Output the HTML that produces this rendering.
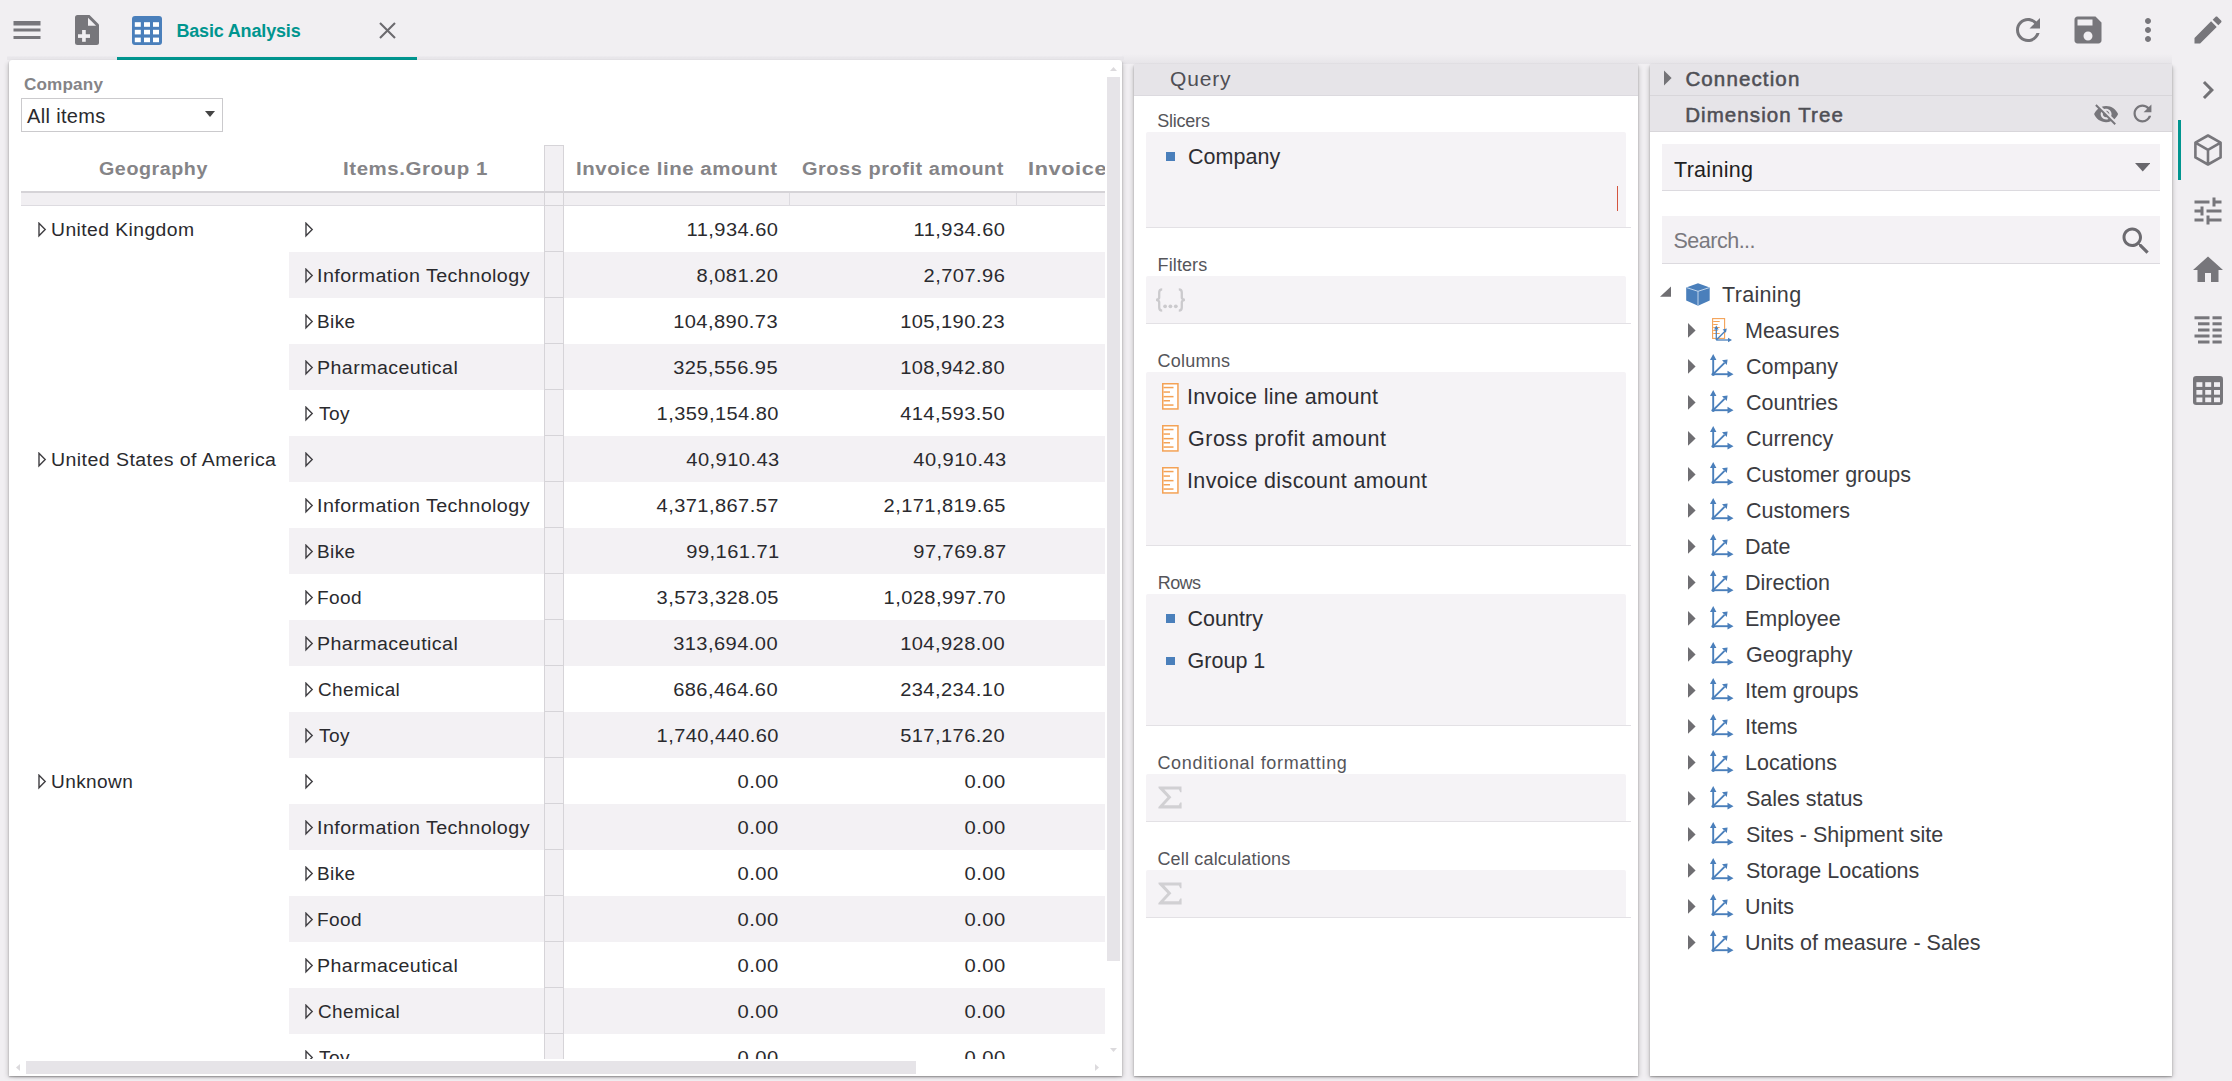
<!DOCTYPE html>
<html><head><meta charset="utf-8"><title>Basic Analysis</title>
<style>
html,body{margin:0;padding:0;width:2232px;height:1081px;overflow:hidden;background:#f1eff2;}
body{position:relative;font-family:"Liberation Sans",sans-serif;}
.t{position:absolute;white-space:nowrap;line-height:1;font-family:"Liberation Sans",sans-serif;}
</style></head><body>
<svg style="position:absolute;left:9px;top:12px;" width="36" height="36" viewBox="0 0 24 24"><path fill="#77767b" d="M3 18h18v-2H3v2zm0-5h18v-2H3v2zm0-6v2h18V6H3z"/></svg>
<svg style="position:absolute;left:69px;top:12px;" width="36" height="36" viewBox="0 0 36 36"><path fill="#77767b" d="M8.5 3h12L30 12.5V30.5a2.5 2.5 0 0 1-2.5 2.5H8.5A2.5 2.5 0 0 1 6 30.5V5.5A2.5 2.5 0 0 1 8.5 3z"/><path fill="#f1eff2" d="M19 5.8v7.9h8.1z"/><rect fill="#f1eff2" x="9" y="22.25" width="12" height="3.65"/><rect fill="#f1eff2" x="13.1" y="18" width="3.65" height="11.8"/></svg>
<svg style="position:absolute;left:132px;top:16px;" width="30" height="29" viewBox="0 0 30 29"><rect fill="#4a7fbb" x="0" y="0" width="30" height="29" rx="3"/><rect fill="#fff" x="2.8" y="6.2" width="6" height="4.6"/><rect fill="#fff" x="2.8" y="13.8" width="6" height="4.6"/><rect fill="#fff" x="2.8" y="21.6" width="6" height="4.6"/><rect fill="#fff" x="12" y="6.2" width="6" height="4.6"/><rect fill="#fff" x="12" y="13.8" width="6" height="4.6"/><rect fill="#fff" x="12" y="21.6" width="6" height="4.6"/><rect fill="#fff" x="21" y="6.2" width="6" height="4.6"/><rect fill="#fff" x="21" y="13.8" width="6" height="4.6"/><rect fill="#fff" x="21" y="21.6" width="6" height="4.6"/></svg>
<svg style="position:absolute;left:378px;top:21px;" width="19" height="19" viewBox="0 0 19 19"><path d="M2 2L17 17M17 2L2 17" stroke="#6b6a6e" stroke-width="2.1" fill="none"/></svg>
<svg style="position:absolute;left:2010px;top:12px;" width="36" height="36" viewBox="0 0 24 24"><path fill="#77767b" d="M17.65 6.35C16.2 4.9 14.21 4 12 4c-4.42 0-7.99 3.58-7.99 8s3.57 8 7.99 8c3.73 0 6.84-2.55 7.73-6h-2.08c-.82 2.33-3.04 4-5.65 4-3.31 0-6-2.69-6-6s2.69-6 6-6c1.66 0 3.14.69 4.22 1.78L13 11h7V4l-2.35 2.35z"/></svg>
<svg style="position:absolute;left:2070px;top:12px;" width="36" height="36" viewBox="0 0 24 24"><path fill="#77767b" d="M17 3H5c-1.11 0-2 .9-2 2v14c0 1.1.89 2 2 2h14c1.1 0 2-.9 2-2V7l-4-4zm-5 16c-1.66 0-3-1.34-3-3s1.34-3 3-3 3 1.34 3 3-1.34 3-3 3zm3-10H5V5h10v4z"/></svg>
<svg style="position:absolute;left:2130px;top:12px;" width="36" height="36" viewBox="0 0 24 24"><path fill="#77767b" d="M12 8c1.1 0 2-.9 2-2s-.9-2-2-2-2 .9-2 2 .9 2 2 2zm0 2c-1.1 0-2 .9-2 2s.9 2 2 2 2-.9 2-2-.9-2-2-2zm0 6c-1.1 0-2 .9-2 2s.9 2 2 2 2-.9 2-2-.9-2-2-2z"/></svg>
<svg style="position:absolute;left:2190px;top:12px;" width="36" height="36" viewBox="0 0 24 24"><path fill="#77767b" d="M3 17.25V21h3.75L17.81 9.94l-3.75-3.75L3 17.25zM20.71 7.04c.39-.39.39-1.02 0-1.41l-2.34-2.34c-.39-.39-1.02-.39-1.41 0l-1.83 1.83 3.75 3.75 1.83-1.83z"/></svg>
<div style="position:absolute;left:7px;top:56px;width:1117px;height:4px;background:linear-gradient(#eeecf0,#e8e6ea 40%,#e8e6ea);"></div>
<div style="position:absolute;left:1122px;top:54px;width:1050px;height:10px;background:linear-gradient(rgba(230,228,232,0),#e6e4e8);"></div>
<div style="position:absolute;left:117px;top:57px;width:300px;height:3px;background:#00958f;"></div>
<div style="position:absolute;left:9px;top:60px;width:1113px;height:1016px;background:#fff;border-radius:3px 3px 0 0;box-shadow:0 1px 2px rgba(0,0,0,0.32),3px 2px 4px -1px rgba(0,0,0,0.12),-3px 2px 4px -1px rgba(0,0,0,0.12)"></div>
<div style="position:absolute;left:21px;top:98px;width:202px;height:34px;background:#fff;box-sizing:border-box;border:1px solid #cbcacd"></div>
<svg style="position:absolute;left:205px;top:111px;" width="10" height="6" viewBox="0 0 10 6"><path d="M0 0H10L5 6z" fill="#444"/></svg>
<div style="position:absolute;left:1107px;top:77px;width:13px;height:884px;background:#e6e4e8;"></div>
<svg style="position:absolute;left:1110px;top:67px;" width="7" height="4" viewBox="0 0 7 4"><path d="M0 4L3.5 0L7 4z" fill="#dcdadd"/></svg>
<svg style="position:absolute;left:1110px;top:1048px;" width="7" height="4" viewBox="0 0 7 4"><path d="M0 0L3.5 4L7 0z" fill="#dcdadd"/></svg>
<div style="position:absolute;left:26px;top:1061px;width:890px;height:13px;background:#e6e4e8;"></div>
<svg style="position:absolute;left:16px;top:1064px;" width="4" height="7" viewBox="0 0 4 7"><path d="M4 0L0 3.5L4 7z" fill="#dcdadd"/></svg>
<svg style="position:absolute;left:1095px;top:1064px;" width="4" height="7" viewBox="0 0 4 7"><path d="M0 0L4 3.5L0 7z" fill="#dcdadd"/></svg>
<div style="position:absolute;left:1134px;top:64px;width:504px;height:1012px;background:#fff;border-radius:2px 2px 0 0;box-shadow:0 1px 2px rgba(0,0,0,0.32),3px 2px 4px -1px rgba(0,0,0,0.12),-3px 2px 4px -1px rgba(0,0,0,0.12)"></div>
<div style="position:absolute;left:1134px;top:64px;width:504px;height:31px;background:#e6e4e8;border-bottom:1px solid #dcdadf"></div>
<div style="position:absolute;left:1146px;top:132px;width:480px;height:96px;background:#f5f3f6;border-radius:2px 2px 0 0"></div>
<div style="position:absolute;left:1146px;top:227px;width:485px;height:1px;background:#e3e1e5;"></div>
<div style="position:absolute;left:1146px;top:276px;width:480px;height:48px;background:#f5f3f6;border-radius:2px 2px 0 0"></div>
<div style="position:absolute;left:1146px;top:323px;width:485px;height:1px;background:#e3e1e5;"></div>
<div style="position:absolute;left:1146px;top:372px;width:480px;height:174px;background:#f5f3f6;border-radius:2px 2px 0 0"></div>
<div style="position:absolute;left:1146px;top:545px;width:485px;height:1px;background:#e3e1e5;"></div>
<div style="position:absolute;left:1146px;top:594px;width:480px;height:132px;background:#f5f3f6;border-radius:2px 2px 0 0"></div>
<div style="position:absolute;left:1146px;top:725px;width:485px;height:1px;background:#e3e1e5;"></div>
<div style="position:absolute;left:1146px;top:774px;width:480px;height:48px;background:#f5f3f6;border-radius:2px 2px 0 0"></div>
<div style="position:absolute;left:1146px;top:821px;width:485px;height:1px;background:#e3e1e5;"></div>
<div style="position:absolute;left:1146px;top:870px;width:480px;height:48px;background:#f5f3f6;border-radius:2px 2px 0 0"></div>
<div style="position:absolute;left:1146px;top:917px;width:485px;height:1px;background:#e3e1e5;"></div>
<div style="position:absolute;left:1166px;top:152px;width:9px;height:9px;background:#4a7fbb;"></div>
<div style="position:absolute;left:1617.2px;top:185.5px;width:1.2px;height:25.5px;background:#d4553f;"></div>
<svg style="position:absolute;left:1154px;top:288px;" width="32" height="24" viewBox="0 0 32 24"><g stroke="#cbcacd" stroke-width="2.3" fill="none"><path d="M8.2 1.4C6 1.4 5.2 2.3 5.2 4.5V9.6C5.2 11 4.3 11.6 2.2 11.9C4.3 12.2 5.2 12.8 5.2 14.2V19.6C5.2 21.8 6 22.7 8.2 22.7"/><path d="M24.8 1.4C27 1.4 27.8 2.3 27.8 4.5V9.6C27.8 11 28.7 11.6 30.8 11.9C28.7 12.2 27.8 12.8 27.8 14.2V19.6C27.8 21.8 27 22.7 24.8 22.7"/></g><g fill="#cbcacd"><circle cx="11.1" cy="18.3" r="1.9"/><circle cx="16.4" cy="18.3" r="1.9"/><circle cx="21.8" cy="18.3" r="1.9"/></g></svg>
<svg style="position:absolute;left:1162px;top:383px;" width="17" height="27" viewBox="0 0 17 27"><rect x="0.75" y="0.75" width="15.2" height="25.2" fill="#fff" stroke="#f4a256" stroke-width="1.5"/><rect x="1.5" y="3.8" width="10" height="1.5" fill="#f4a256"/><rect x="1.5" y="8.3" width="6.5" height="1.5" fill="#f4a256"/><rect x="1.5" y="12.9" width="10" height="1.5" fill="#f4a256"/><rect x="1.5" y="17.0" width="6.5" height="1.5" fill="#f4a256"/><rect x="1.5" y="21.3" width="10" height="1.5" fill="#f4a256"/></svg>
<svg style="position:absolute;left:1162px;top:425px;" width="17" height="27" viewBox="0 0 17 27"><rect x="0.75" y="0.75" width="15.2" height="25.2" fill="#fff" stroke="#f4a256" stroke-width="1.5"/><rect x="1.5" y="3.8" width="10" height="1.5" fill="#f4a256"/><rect x="1.5" y="8.3" width="6.5" height="1.5" fill="#f4a256"/><rect x="1.5" y="12.9" width="10" height="1.5" fill="#f4a256"/><rect x="1.5" y="17.0" width="6.5" height="1.5" fill="#f4a256"/><rect x="1.5" y="21.3" width="10" height="1.5" fill="#f4a256"/></svg>
<svg style="position:absolute;left:1162px;top:467px;" width="17" height="27" viewBox="0 0 17 27"><rect x="0.75" y="0.75" width="15.2" height="25.2" fill="#fff" stroke="#f4a256" stroke-width="1.5"/><rect x="1.5" y="3.8" width="10" height="1.5" fill="#f4a256"/><rect x="1.5" y="8.3" width="6.5" height="1.5" fill="#f4a256"/><rect x="1.5" y="12.9" width="10" height="1.5" fill="#f4a256"/><rect x="1.5" y="17.0" width="6.5" height="1.5" fill="#f4a256"/><rect x="1.5" y="21.3" width="10" height="1.5" fill="#f4a256"/></svg>
<div style="position:absolute;left:1166px;top:614px;width:9px;height:8.5px;background:#4a7fbb;"></div>
<div style="position:absolute;left:1166px;top:656.5px;width:9px;height:8.5px;background:#4a7fbb;"></div>
<svg style="position:absolute;left:1158.3px;top:786.3px;" width="24" height="23" viewBox="0 0 24 23"><path d="M0.5 0.5H23.5V6.2H22.2L20.9 3.6H6.3L13.4 11.3L5.9 19.2H20.8L22.1 16.4H23.6V22.5H0.4V20.9L9.4 11.3L0.5 2.1z" fill="#d1d0d3"/></svg>
<svg style="position:absolute;left:1158.3px;top:882.4px;" width="24" height="23" viewBox="0 0 24 23"><path d="M0.5 0.5H23.5V6.2H22.2L20.9 3.6H6.3L13.4 11.3L5.9 19.2H20.8L22.1 16.4H23.6V22.5H0.4V20.9L9.4 11.3L0.5 2.1z" fill="#d1d0d3"/></svg>
<div style="position:absolute;left:1650px;top:64px;width:522px;height:1012px;background:#fff;border-radius:2px 2px 0 0;box-shadow:0 1px 2px rgba(0,0,0,0.32),3px 2px 4px -1px rgba(0,0,0,0.12),-3px 2px 4px -1px rgba(0,0,0,0.12)"></div>
<div style="position:absolute;left:1650px;top:64px;width:522px;height:31px;background:#e6e4e8;border-bottom:1px solid #d8d6da"></div>
<div style="position:absolute;left:1650px;top:96px;width:522px;height:35px;background:#e6e4e8;border-bottom:1px solid #d8d6da"></div>
<svg style="position:absolute;left:1664px;top:70px;" width="8" height="16" viewBox="0 0 8 16"><path d="M0 0.4L7.6 8L0 15.4z" fill="#747377"/></svg>
<svg style="position:absolute;left:2093px;top:100.5px;" width="26.2" height="26.2" viewBox="0 0 24 24"><path fill="#77767b" d="M12 7c2.76 0 5 2.24 5 5 0 .65-.13 1.26-.36 1.83l2.92 2.92c1.51-1.26 2.7-2.89 3.43-4.75-1.73-4.39-6-7.5-11-7.5-1.4 0-2.74.25-3.98.7l2.16 2.16C10.74 7.13 11.35 7 12 7zM2 4.27l2.28 2.28.46.46C3.08 8.3 1.780 10.02 1 12c1.73 4.39 6 7.5 11 7.5 1.55 0 3.03-.3 4.38-.84l.42.42L19.73 22 21 20.73 3.27 3 2 4.27zM7.53 9.8l1.55 1.55c-.05.21-.08.43-.08.65 0 1.66 1.34 3 3 3 .22 0 .44-.03.65-.08l1.55 1.55c-.67.33-1.41.53-2.2.53-2.76 0-5-2.24-5-5 0-.79.2-1.53.53-2.2zm4.31-.78l3.15 3.15.02-.16c0-1.660-1.34-3-3-3l-.17.01z"/></svg>
<svg style="position:absolute;left:2128.9px;top:100.2px;" width="26.9" height="26.9" viewBox="0 0 24 24"><path fill="#77767b" d="M17.65 6.35C16.2 4.9 14.21 4 12 4c-4.42 0-7.99 3.58-7.99 8s3.57 8 7.99 8c3.73 0 6.84-2.55 7.73-6h-2.08c-.82 2.33-3.04 4-5.65 4-3.31 0-6-2.69-6-6s2.69-6 6-6c1.66 0 3.14.69 4.22 1.78L13 11h7V4l-2.35 2.35z"/></svg>
<div style="position:absolute;left:1662px;top:144px;width:498px;height:47px;background:#f4f2f5;border-bottom:1px solid #dcdadf;box-sizing:border-box"></div>
<svg style="position:absolute;left:2134.5px;top:163px;" width="15.5" height="8.5" viewBox="0 0 15.5 8.5"><path d="M0 0H15.5L7.75 8.5z" fill="#68676c"/></svg>
<div style="position:absolute;left:1662px;top:216px;width:498px;height:48px;background:#f4f2f5;border-bottom:1px solid #dcdadf;box-sizing:border-box"></div>
<svg style="position:absolute;left:2118px;top:222.5px;" width="36" height="36" viewBox="0 0 24 24"><path fill="#6c6b70" d="M15.5 14h-.79l-.28-.27C15.41 12.59 16 11.11 16 9.5 16 5.91 13.09 3 9.5 3S3 5.91 3 9.5 5.910 16 9.5 16c1.61 0 3.09-.59 4.23-1.57l.27.28v.79l5 4.99L20.49 19l-4.99-5zm-6 0C7.01 14 5 11.99 5 9.5S7.01 5 9.5 5 14 7.01 14 9.5 11.99 14 9.5 14z"/></svg>
<svg style="position:absolute;left:1660px;top:286px;" width="11.5" height="11" viewBox="0 0 11.5 11"><path d="M11 0.4V10.7H0z" fill="#6f6e72"/></svg>
<svg style="position:absolute;left:1686px;top:282.5px;" width="24" height="23" viewBox="0 0 24 23"><path d="M12 0.3L23.7 4.5V17.5L12 22.7L0.2 17.5V4.5z" fill="#4a7fbb"/><path d="M0.6 4.6L12 8.3L23.4 4.6M12 8.3V22.5" stroke="#cfe0f2" stroke-width="0.9" fill="none"/></svg>
<svg style="position:absolute;left:1688px;top:322.6px;" width="8" height="15" viewBox="0 0 8 15"><path d="M0 0L7.6 7.4L0 14.8z" fill="#6f6e72"/></svg>
<svg style="position:absolute;left:1710px;top:318.2px;" width="23" height="25" viewBox="0 0 23 25"><rect x="2.6" y="0.6" width="12" height="19.8" fill="#fff" stroke="#f4a256" stroke-width="1.1"/><g fill="#f4a256"><rect x="3.2" y="3" width="6.5" height="1"/><rect x="3.2" y="6" width="4.5" height="1"/><rect x="3.2" y="9" width="6.5" height="1"/><rect x="3.2" y="12" width="4.5" height="1"/><rect x="3.2" y="15" width="6.5" height="1"/></g><g stroke="#4a7fbb" stroke-width="1.3" fill="none"><path d="M6.3 22V10.5"/><path d="M6.3 22H19"/><path d="M6.3 22L15 13.3"/></g><g fill="#4a7fbb"><path d="M4 11.5L6.3 7.5L8.6 11.5z"/><path d="M18 19.7L22 22L18 24.3z"/><path d="M12.6 11.6L16.8 10.6L15.9 14.8z"/></g></svg>
<svg style="position:absolute;left:1688px;top:358.6px;" width="8" height="15" viewBox="0 0 8 15"><path d="M0 0L7.6 7.4L0 14.8z" fill="#6f6e72"/></svg>
<svg style="position:absolute;left:1710.4px;top:354.2px;" width="24" height="24" viewBox="0 0 24 24"><g stroke="#4a7fbb" stroke-width="1.9" fill="none"><path d="M3.2 20.2V4.5"/><path d="M3.2 20.2H18.5"/><path d="M3.2 20.2L14.5 8.9"/></g><g fill="#4a7fbb"><path d="M0 6L3.2 0L6.4 6z"/><path d="M17.5 16.8L23.5 20.2L17.5 23.6z"/><path d="M12 6.2L17.6 5.4L16.8 11z"/><circle cx="3.2" cy="20.2" r="1.7"/></g></svg>
<svg style="position:absolute;left:1688px;top:394.6px;" width="8" height="15" viewBox="0 0 8 15"><path d="M0 0L7.6 7.4L0 14.8z" fill="#6f6e72"/></svg>
<svg style="position:absolute;left:1710.4px;top:390.2px;" width="24" height="24" viewBox="0 0 24 24"><g stroke="#4a7fbb" stroke-width="1.9" fill="none"><path d="M3.2 20.2V4.5"/><path d="M3.2 20.2H18.5"/><path d="M3.2 20.2L14.5 8.9"/></g><g fill="#4a7fbb"><path d="M0 6L3.2 0L6.4 6z"/><path d="M17.5 16.8L23.5 20.2L17.5 23.6z"/><path d="M12 6.2L17.6 5.4L16.8 11z"/><circle cx="3.2" cy="20.2" r="1.7"/></g></svg>
<svg style="position:absolute;left:1688px;top:430.6px;" width="8" height="15" viewBox="0 0 8 15"><path d="M0 0L7.6 7.4L0 14.8z" fill="#6f6e72"/></svg>
<svg style="position:absolute;left:1710.4px;top:426.2px;" width="24" height="24" viewBox="0 0 24 24"><g stroke="#4a7fbb" stroke-width="1.9" fill="none"><path d="M3.2 20.2V4.5"/><path d="M3.2 20.2H18.5"/><path d="M3.2 20.2L14.5 8.9"/></g><g fill="#4a7fbb"><path d="M0 6L3.2 0L6.4 6z"/><path d="M17.5 16.8L23.5 20.2L17.5 23.6z"/><path d="M12 6.2L17.6 5.4L16.8 11z"/><circle cx="3.2" cy="20.2" r="1.7"/></g></svg>
<svg style="position:absolute;left:1688px;top:466.6px;" width="8" height="15" viewBox="0 0 8 15"><path d="M0 0L7.6 7.4L0 14.8z" fill="#6f6e72"/></svg>
<svg style="position:absolute;left:1710.4px;top:462.2px;" width="24" height="24" viewBox="0 0 24 24"><g stroke="#4a7fbb" stroke-width="1.9" fill="none"><path d="M3.2 20.2V4.5"/><path d="M3.2 20.2H18.5"/><path d="M3.2 20.2L14.5 8.9"/></g><g fill="#4a7fbb"><path d="M0 6L3.2 0L6.4 6z"/><path d="M17.5 16.8L23.5 20.2L17.5 23.6z"/><path d="M12 6.2L17.6 5.4L16.8 11z"/><circle cx="3.2" cy="20.2" r="1.7"/></g></svg>
<svg style="position:absolute;left:1688px;top:502.59999999999997px;" width="8" height="15" viewBox="0 0 8 15"><path d="M0 0L7.6 7.4L0 14.8z" fill="#6f6e72"/></svg>
<svg style="position:absolute;left:1710.4px;top:498.19999999999993px;" width="24" height="24" viewBox="0 0 24 24"><g stroke="#4a7fbb" stroke-width="1.9" fill="none"><path d="M3.2 20.2V4.5"/><path d="M3.2 20.2H18.5"/><path d="M3.2 20.2L14.5 8.9"/></g><g fill="#4a7fbb"><path d="M0 6L3.2 0L6.4 6z"/><path d="M17.5 16.8L23.5 20.2L17.5 23.6z"/><path d="M12 6.2L17.6 5.4L16.8 11z"/><circle cx="3.2" cy="20.2" r="1.7"/></g></svg>
<svg style="position:absolute;left:1688px;top:538.5999999999999px;" width="8" height="15" viewBox="0 0 8 15"><path d="M0 0L7.6 7.4L0 14.8z" fill="#6f6e72"/></svg>
<svg style="position:absolute;left:1710.4px;top:534.1999999999999px;" width="24" height="24" viewBox="0 0 24 24"><g stroke="#4a7fbb" stroke-width="1.9" fill="none"><path d="M3.2 20.2V4.5"/><path d="M3.2 20.2H18.5"/><path d="M3.2 20.2L14.5 8.9"/></g><g fill="#4a7fbb"><path d="M0 6L3.2 0L6.4 6z"/><path d="M17.5 16.8L23.5 20.2L17.5 23.6z"/><path d="M12 6.2L17.6 5.4L16.8 11z"/><circle cx="3.2" cy="20.2" r="1.7"/></g></svg>
<svg style="position:absolute;left:1688px;top:574.5999999999999px;" width="8" height="15" viewBox="0 0 8 15"><path d="M0 0L7.6 7.4L0 14.8z" fill="#6f6e72"/></svg>
<svg style="position:absolute;left:1710.4px;top:570.1999999999999px;" width="24" height="24" viewBox="0 0 24 24"><g stroke="#4a7fbb" stroke-width="1.9" fill="none"><path d="M3.2 20.2V4.5"/><path d="M3.2 20.2H18.5"/><path d="M3.2 20.2L14.5 8.9"/></g><g fill="#4a7fbb"><path d="M0 6L3.2 0L6.4 6z"/><path d="M17.5 16.8L23.5 20.2L17.5 23.6z"/><path d="M12 6.2L17.6 5.4L16.8 11z"/><circle cx="3.2" cy="20.2" r="1.7"/></g></svg>
<svg style="position:absolute;left:1688px;top:610.5999999999999px;" width="8" height="15" viewBox="0 0 8 15"><path d="M0 0L7.6 7.4L0 14.8z" fill="#6f6e72"/></svg>
<svg style="position:absolute;left:1710.4px;top:606.1999999999999px;" width="24" height="24" viewBox="0 0 24 24"><g stroke="#4a7fbb" stroke-width="1.9" fill="none"><path d="M3.2 20.2V4.5"/><path d="M3.2 20.2H18.5"/><path d="M3.2 20.2L14.5 8.9"/></g><g fill="#4a7fbb"><path d="M0 6L3.2 0L6.4 6z"/><path d="M17.5 16.8L23.5 20.2L17.5 23.6z"/><path d="M12 6.2L17.6 5.4L16.8 11z"/><circle cx="3.2" cy="20.2" r="1.7"/></g></svg>
<svg style="position:absolute;left:1688px;top:646.5999999999999px;" width="8" height="15" viewBox="0 0 8 15"><path d="M0 0L7.6 7.4L0 14.8z" fill="#6f6e72"/></svg>
<svg style="position:absolute;left:1710.4px;top:642.1999999999999px;" width="24" height="24" viewBox="0 0 24 24"><g stroke="#4a7fbb" stroke-width="1.9" fill="none"><path d="M3.2 20.2V4.5"/><path d="M3.2 20.2H18.5"/><path d="M3.2 20.2L14.5 8.9"/></g><g fill="#4a7fbb"><path d="M0 6L3.2 0L6.4 6z"/><path d="M17.5 16.8L23.5 20.2L17.5 23.6z"/><path d="M12 6.2L17.6 5.4L16.8 11z"/><circle cx="3.2" cy="20.2" r="1.7"/></g></svg>
<svg style="position:absolute;left:1688px;top:682.5999999999999px;" width="8" height="15" viewBox="0 0 8 15"><path d="M0 0L7.6 7.4L0 14.8z" fill="#6f6e72"/></svg>
<svg style="position:absolute;left:1710.4px;top:678.1999999999999px;" width="24" height="24" viewBox="0 0 24 24"><g stroke="#4a7fbb" stroke-width="1.9" fill="none"><path d="M3.2 20.2V4.5"/><path d="M3.2 20.2H18.5"/><path d="M3.2 20.2L14.5 8.9"/></g><g fill="#4a7fbb"><path d="M0 6L3.2 0L6.4 6z"/><path d="M17.5 16.8L23.5 20.2L17.5 23.6z"/><path d="M12 6.2L17.6 5.4L16.8 11z"/><circle cx="3.2" cy="20.2" r="1.7"/></g></svg>
<svg style="position:absolute;left:1688px;top:718.5999999999999px;" width="8" height="15" viewBox="0 0 8 15"><path d="M0 0L7.6 7.4L0 14.8z" fill="#6f6e72"/></svg>
<svg style="position:absolute;left:1710.4px;top:714.1999999999999px;" width="24" height="24" viewBox="0 0 24 24"><g stroke="#4a7fbb" stroke-width="1.9" fill="none"><path d="M3.2 20.2V4.5"/><path d="M3.2 20.2H18.5"/><path d="M3.2 20.2L14.5 8.9"/></g><g fill="#4a7fbb"><path d="M0 6L3.2 0L6.4 6z"/><path d="M17.5 16.8L23.5 20.2L17.5 23.6z"/><path d="M12 6.2L17.6 5.4L16.8 11z"/><circle cx="3.2" cy="20.2" r="1.7"/></g></svg>
<svg style="position:absolute;left:1688px;top:754.5999999999999px;" width="8" height="15" viewBox="0 0 8 15"><path d="M0 0L7.6 7.4L0 14.8z" fill="#6f6e72"/></svg>
<svg style="position:absolute;left:1710.4px;top:750.1999999999999px;" width="24" height="24" viewBox="0 0 24 24"><g stroke="#4a7fbb" stroke-width="1.9" fill="none"><path d="M3.2 20.2V4.5"/><path d="M3.2 20.2H18.5"/><path d="M3.2 20.2L14.5 8.9"/></g><g fill="#4a7fbb"><path d="M0 6L3.2 0L6.4 6z"/><path d="M17.5 16.8L23.5 20.2L17.5 23.6z"/><path d="M12 6.2L17.6 5.4L16.8 11z"/><circle cx="3.2" cy="20.2" r="1.7"/></g></svg>
<svg style="position:absolute;left:1688px;top:790.5999999999999px;" width="8" height="15" viewBox="0 0 8 15"><path d="M0 0L7.6 7.4L0 14.8z" fill="#6f6e72"/></svg>
<svg style="position:absolute;left:1710.4px;top:786.1999999999999px;" width="24" height="24" viewBox="0 0 24 24"><g stroke="#4a7fbb" stroke-width="1.9" fill="none"><path d="M3.2 20.2V4.5"/><path d="M3.2 20.2H18.5"/><path d="M3.2 20.2L14.5 8.9"/></g><g fill="#4a7fbb"><path d="M0 6L3.2 0L6.4 6z"/><path d="M17.5 16.8L23.5 20.2L17.5 23.6z"/><path d="M12 6.2L17.6 5.4L16.8 11z"/><circle cx="3.2" cy="20.2" r="1.7"/></g></svg>
<svg style="position:absolute;left:1688px;top:826.5999999999999px;" width="8" height="15" viewBox="0 0 8 15"><path d="M0 0L7.6 7.4L0 14.8z" fill="#6f6e72"/></svg>
<svg style="position:absolute;left:1710.4px;top:822.1999999999999px;" width="24" height="24" viewBox="0 0 24 24"><g stroke="#4a7fbb" stroke-width="1.9" fill="none"><path d="M3.2 20.2V4.5"/><path d="M3.2 20.2H18.5"/><path d="M3.2 20.2L14.5 8.9"/></g><g fill="#4a7fbb"><path d="M0 6L3.2 0L6.4 6z"/><path d="M17.5 16.8L23.5 20.2L17.5 23.6z"/><path d="M12 6.2L17.6 5.4L16.8 11z"/><circle cx="3.2" cy="20.2" r="1.7"/></g></svg>
<svg style="position:absolute;left:1688px;top:862.5999999999999px;" width="8" height="15" viewBox="0 0 8 15"><path d="M0 0L7.6 7.4L0 14.8z" fill="#6f6e72"/></svg>
<svg style="position:absolute;left:1710.4px;top:858.1999999999999px;" width="24" height="24" viewBox="0 0 24 24"><g stroke="#4a7fbb" stroke-width="1.9" fill="none"><path d="M3.2 20.2V4.5"/><path d="M3.2 20.2H18.5"/><path d="M3.2 20.2L14.5 8.9"/></g><g fill="#4a7fbb"><path d="M0 6L3.2 0L6.4 6z"/><path d="M17.5 16.8L23.5 20.2L17.5 23.6z"/><path d="M12 6.2L17.6 5.4L16.8 11z"/><circle cx="3.2" cy="20.2" r="1.7"/></g></svg>
<svg style="position:absolute;left:1688px;top:898.5999999999999px;" width="8" height="15" viewBox="0 0 8 15"><path d="M0 0L7.6 7.4L0 14.8z" fill="#6f6e72"/></svg>
<svg style="position:absolute;left:1710.4px;top:894.1999999999999px;" width="24" height="24" viewBox="0 0 24 24"><g stroke="#4a7fbb" stroke-width="1.9" fill="none"><path d="M3.2 20.2V4.5"/><path d="M3.2 20.2H18.5"/><path d="M3.2 20.2L14.5 8.9"/></g><g fill="#4a7fbb"><path d="M0 6L3.2 0L6.4 6z"/><path d="M17.5 16.8L23.5 20.2L17.5 23.6z"/><path d="M12 6.2L17.6 5.4L16.8 11z"/><circle cx="3.2" cy="20.2" r="1.7"/></g></svg>
<svg style="position:absolute;left:1688px;top:934.5999999999999px;" width="8" height="15" viewBox="0 0 8 15"><path d="M0 0L7.6 7.4L0 14.8z" fill="#6f6e72"/></svg>
<svg style="position:absolute;left:1710.4px;top:930.1999999999999px;" width="24" height="24" viewBox="0 0 24 24"><g stroke="#4a7fbb" stroke-width="1.9" fill="none"><path d="M3.2 20.2V4.5"/><path d="M3.2 20.2H18.5"/><path d="M3.2 20.2L14.5 8.9"/></g><g fill="#4a7fbb"><path d="M0 6L3.2 0L6.4 6z"/><path d="M17.5 16.8L23.5 20.2L17.5 23.6z"/><path d="M12 6.2L17.6 5.4L16.8 11z"/><circle cx="3.2" cy="20.2" r="1.7"/></g></svg>
<svg style="position:absolute;left:2190px;top:72px;" width="36" height="36" viewBox="0 0 24 24"><path fill="#727175" d="M10 6L8.59 7.41 13.17 12l-4.58 4.59L10 18l6-6z"/></svg>
<div style="position:absolute;left:2178px;top:120px;width:3px;height:60px;background:#00958f;"></div>
<svg style="position:absolute;left:2193px;top:134px;" width="30" height="32" viewBox="0 0 30 32"><path d="M15 1.5L27.6 8.6V23.4L15 30.5L2.4 23.4V8.6z M2.8 8.8L15 15.8L27.2 8.8 M15 15.8V30.2" stroke="#77767b" stroke-width="2.6" fill="none" stroke-linejoin="round"/></svg>
<svg style="position:absolute;left:2190px;top:192.5px;" width="36" height="36" viewBox="0 0 24 24"><path fill="#77767b" d="M3 17v2h6v-2H3zM3 5v2h10V5H3zm10 16v-2h8v-2h-8v-2h-2v6h2zM7 9v2H3v2h4v2h2V9H7zm14 4v-2H11v2h10zm-6-4h2V7h4V5h-4V3h-2v6z"/></svg>
<svg style="position:absolute;left:2190px;top:252px;" width="36" height="36" viewBox="0 0 24 24"><path fill="#77767b" d="M10 20v-6h4v6h5v-8h3L12 3 2 12h3v8z"/></svg>
<svg style="position:absolute;left:2190px;top:310px;" width="36" height="40" viewBox="0 0 36 40"><rect x="4.5" y="6.300000000000011" width="15.0" height="3" fill="#77767b"/><rect x="22.5" y="6.300000000000011" width="9.2" height="3" fill="#77767b"/><rect x="8" y="12.300000000000011" width="11.5" height="3" fill="#77767b"/><rect x="22.5" y="12.300000000000011" width="9.2" height="3" fill="#77767b"/><rect x="8" y="18.5" width="11.5" height="3" fill="#77767b"/><rect x="22.5" y="18.5" width="9.2" height="3" fill="#77767b"/><rect x="4.5" y="24.5" width="15.0" height="3" fill="#77767b"/><rect x="22.5" y="24.5" width="9.2" height="3" fill="#77767b"/><rect x="8" y="30.5" width="11.5" height="3" fill="#77767b"/><rect x="22.5" y="30.5" width="9.2" height="3" fill="#77767b"/></svg>
<svg style="position:absolute;left:2193px;top:376px;" width="30" height="29" viewBox="0 0 30 29"><rect fill="#77767b" x="0" y="0" width="30" height="29" rx="3.2"/><rect fill="#f0eef2" x="3.4" y="6.2" width="6" height="4.7"/><rect fill="#f0eef2" x="3.4" y="14" width="6" height="4.7"/><rect fill="#f0eef2" x="3.4" y="21.5" width="6" height="4.7"/><rect fill="#f0eef2" x="12.2" y="6.2" width="6" height="4.7"/><rect fill="#f0eef2" x="12.2" y="14" width="6" height="4.7"/><rect fill="#f0eef2" x="12.2" y="21.5" width="6" height="4.7"/><rect fill="#f0eef2" x="21" y="6.2" width="6" height="4.7"/><rect fill="#f0eef2" x="21" y="14" width="6" height="4.7"/><rect fill="#f0eef2" x="21" y="21.5" width="6" height="4.7"/></svg>
<div style="position:absolute;left:0;top:0;width:1105px;height:1059px;overflow:hidden"><div style="position:absolute;left:289px;top:252px;width:255px;height:46px;background:#f3f1f4;"></div><div style="position:absolute;left:564px;top:252px;width:541px;height:46px;background:#f3f1f4;"></div><div style="position:absolute;left:289px;top:344px;width:255px;height:46px;background:#f3f1f4;"></div><div style="position:absolute;left:564px;top:344px;width:541px;height:46px;background:#f3f1f4;"></div><div style="position:absolute;left:289px;top:436px;width:255px;height:46px;background:#f3f1f4;"></div><div style="position:absolute;left:564px;top:436px;width:541px;height:46px;background:#f3f1f4;"></div><div style="position:absolute;left:289px;top:528px;width:255px;height:46px;background:#f3f1f4;"></div><div style="position:absolute;left:564px;top:528px;width:541px;height:46px;background:#f3f1f4;"></div><div style="position:absolute;left:289px;top:620px;width:255px;height:46px;background:#f3f1f4;"></div><div style="position:absolute;left:564px;top:620px;width:541px;height:46px;background:#f3f1f4;"></div><div style="position:absolute;left:289px;top:712px;width:255px;height:46px;background:#f3f1f4;"></div><div style="position:absolute;left:564px;top:712px;width:541px;height:46px;background:#f3f1f4;"></div><div style="position:absolute;left:289px;top:804px;width:255px;height:46px;background:#f3f1f4;"></div><div style="position:absolute;left:564px;top:804px;width:541px;height:46px;background:#f3f1f4;"></div><div style="position:absolute;left:289px;top:896px;width:255px;height:46px;background:#f3f1f4;"></div><div style="position:absolute;left:564px;top:896px;width:541px;height:46px;background:#f3f1f4;"></div><div style="position:absolute;left:289px;top:988px;width:255px;height:46px;background:#f3f1f4;"></div><div style="position:absolute;left:564px;top:988px;width:541px;height:46px;background:#f3f1f4;"></div><div style="position:absolute;left:21px;top:191px;width:1084px;height:2px;background:#d5d3d7;"></div><div style="position:absolute;left:21px;top:193px;width:1084px;height:12px;background:#f1eff2;"></div><div style="position:absolute;left:21px;top:205px;width:1084px;height:1px;background:#dddbe0;"></div><div style="position:absolute;left:789px;top:193px;width:1px;height:12px;background:#dddbe0;"></div><div style="position:absolute;left:1016px;top:193px;width:1px;height:12px;background:#dddbe0;"></div><div style="position:absolute;left:544px;top:145px;width:20px;height:1000px;background:#f2f0f3;box-sizing:border-box;border-left:1px solid #d6d4d8;border-right:1px solid #d6d4d8;border-top:1px solid #d6d4d8"></div><div style="position:absolute;left:545px;top:205px;width:18px;height:1px;background:#d6d4d8;"></div><div style="position:absolute;left:545px;top:251px;width:18px;height:1px;background:#d6d4d8;"></div><div style="position:absolute;left:545px;top:297px;width:18px;height:1px;background:#d6d4d8;"></div><div style="position:absolute;left:545px;top:343px;width:18px;height:1px;background:#d6d4d8;"></div><div style="position:absolute;left:545px;top:389px;width:18px;height:1px;background:#d6d4d8;"></div><div style="position:absolute;left:545px;top:435px;width:18px;height:1px;background:#d6d4d8;"></div><div style="position:absolute;left:545px;top:481px;width:18px;height:1px;background:#d6d4d8;"></div><div style="position:absolute;left:545px;top:527px;width:18px;height:1px;background:#d6d4d8;"></div><div style="position:absolute;left:545px;top:573px;width:18px;height:1px;background:#d6d4d8;"></div><div style="position:absolute;left:545px;top:619px;width:18px;height:1px;background:#d6d4d8;"></div><div style="position:absolute;left:545px;top:665px;width:18px;height:1px;background:#d6d4d8;"></div><div style="position:absolute;left:545px;top:711px;width:18px;height:1px;background:#d6d4d8;"></div><div style="position:absolute;left:545px;top:757px;width:18px;height:1px;background:#d6d4d8;"></div><div style="position:absolute;left:545px;top:803px;width:18px;height:1px;background:#d6d4d8;"></div><div style="position:absolute;left:545px;top:849px;width:18px;height:1px;background:#d6d4d8;"></div><div style="position:absolute;left:545px;top:895px;width:18px;height:1px;background:#d6d4d8;"></div><div style="position:absolute;left:545px;top:941px;width:18px;height:1px;background:#d6d4d8;"></div><div style="position:absolute;left:545px;top:987px;width:18px;height:1px;background:#d6d4d8;"></div><div style="position:absolute;left:545px;top:1033px;width:18px;height:1px;background:#d6d4d8;"></div><div style="position:absolute;left:545px;top:1079px;width:18px;height:1px;background:#d6d4d8;"></div><div style="position:absolute;left:545px;top:191px;width:18px;height:2px;background:#d5d3d7;"></div><svg style="position:absolute;left:37.7px;top:222px" width="9" height="16" viewBox="0 0 9 16"><path d="M1 1.2L7.2 7.5 1 13.8z" fill="none" stroke="#3f3e42" stroke-width="1.4" stroke-linejoin="miter"/></svg><svg style="position:absolute;left:305px;top:222px" width="9" height="16" viewBox="0 0 9 16"><path d="M1 1.2L7.2 7.5 1 13.8z" fill="none" stroke="#3f3e42" stroke-width="1.4" stroke-linejoin="miter"/></svg><svg style="position:absolute;left:305px;top:268px" width="9" height="16" viewBox="0 0 9 16"><path d="M1 1.2L7.2 7.5 1 13.8z" fill="none" stroke="#3f3e42" stroke-width="1.4" stroke-linejoin="miter"/></svg><svg style="position:absolute;left:305px;top:314px" width="9" height="16" viewBox="0 0 9 16"><path d="M1 1.2L7.2 7.5 1 13.8z" fill="none" stroke="#3f3e42" stroke-width="1.4" stroke-linejoin="miter"/></svg><svg style="position:absolute;left:305px;top:360px" width="9" height="16" viewBox="0 0 9 16"><path d="M1 1.2L7.2 7.5 1 13.8z" fill="none" stroke="#3f3e42" stroke-width="1.4" stroke-linejoin="miter"/></svg><svg style="position:absolute;left:305px;top:406px" width="9" height="16" viewBox="0 0 9 16"><path d="M1 1.2L7.2 7.5 1 13.8z" fill="none" stroke="#3f3e42" stroke-width="1.4" stroke-linejoin="miter"/></svg><svg style="position:absolute;left:37.7px;top:452px" width="9" height="16" viewBox="0 0 9 16"><path d="M1 1.2L7.2 7.5 1 13.8z" fill="none" stroke="#3f3e42" stroke-width="1.4" stroke-linejoin="miter"/></svg><svg style="position:absolute;left:305px;top:452px" width="9" height="16" viewBox="0 0 9 16"><path d="M1 1.2L7.2 7.5 1 13.8z" fill="none" stroke="#3f3e42" stroke-width="1.4" stroke-linejoin="miter"/></svg><svg style="position:absolute;left:305px;top:498px" width="9" height="16" viewBox="0 0 9 16"><path d="M1 1.2L7.2 7.5 1 13.8z" fill="none" stroke="#3f3e42" stroke-width="1.4" stroke-linejoin="miter"/></svg><svg style="position:absolute;left:305px;top:544px" width="9" height="16" viewBox="0 0 9 16"><path d="M1 1.2L7.2 7.5 1 13.8z" fill="none" stroke="#3f3e42" stroke-width="1.4" stroke-linejoin="miter"/></svg><svg style="position:absolute;left:305px;top:590px" width="9" height="16" viewBox="0 0 9 16"><path d="M1 1.2L7.2 7.5 1 13.8z" fill="none" stroke="#3f3e42" stroke-width="1.4" stroke-linejoin="miter"/></svg><svg style="position:absolute;left:305px;top:636px" width="9" height="16" viewBox="0 0 9 16"><path d="M1 1.2L7.2 7.5 1 13.8z" fill="none" stroke="#3f3e42" stroke-width="1.4" stroke-linejoin="miter"/></svg><svg style="position:absolute;left:305px;top:682px" width="9" height="16" viewBox="0 0 9 16"><path d="M1 1.2L7.2 7.5 1 13.8z" fill="none" stroke="#3f3e42" stroke-width="1.4" stroke-linejoin="miter"/></svg><svg style="position:absolute;left:305px;top:728px" width="9" height="16" viewBox="0 0 9 16"><path d="M1 1.2L7.2 7.5 1 13.8z" fill="none" stroke="#3f3e42" stroke-width="1.4" stroke-linejoin="miter"/></svg><svg style="position:absolute;left:37.7px;top:774px" width="9" height="16" viewBox="0 0 9 16"><path d="M1 1.2L7.2 7.5 1 13.8z" fill="none" stroke="#3f3e42" stroke-width="1.4" stroke-linejoin="miter"/></svg><svg style="position:absolute;left:305px;top:774px" width="9" height="16" viewBox="0 0 9 16"><path d="M1 1.2L7.2 7.5 1 13.8z" fill="none" stroke="#3f3e42" stroke-width="1.4" stroke-linejoin="miter"/></svg><svg style="position:absolute;left:305px;top:820px" width="9" height="16" viewBox="0 0 9 16"><path d="M1 1.2L7.2 7.5 1 13.8z" fill="none" stroke="#3f3e42" stroke-width="1.4" stroke-linejoin="miter"/></svg><svg style="position:absolute;left:305px;top:866px" width="9" height="16" viewBox="0 0 9 16"><path d="M1 1.2L7.2 7.5 1 13.8z" fill="none" stroke="#3f3e42" stroke-width="1.4" stroke-linejoin="miter"/></svg><svg style="position:absolute;left:305px;top:912px" width="9" height="16" viewBox="0 0 9 16"><path d="M1 1.2L7.2 7.5 1 13.8z" fill="none" stroke="#3f3e42" stroke-width="1.4" stroke-linejoin="miter"/></svg><svg style="position:absolute;left:305px;top:958px" width="9" height="16" viewBox="0 0 9 16"><path d="M1 1.2L7.2 7.5 1 13.8z" fill="none" stroke="#3f3e42" stroke-width="1.4" stroke-linejoin="miter"/></svg><svg style="position:absolute;left:305px;top:1004px" width="9" height="16" viewBox="0 0 9 16"><path d="M1 1.2L7.2 7.5 1 13.8z" fill="none" stroke="#3f3e42" stroke-width="1.4" stroke-linejoin="miter"/></svg><svg style="position:absolute;left:305px;top:1050px" width="9" height="16" viewBox="0 0 9 16"><path d="M1 1.2L7.2 7.5 1 13.8z" fill="none" stroke="#3f3e42" stroke-width="1.4" stroke-linejoin="miter"/></svg><div class="t" style="top:220.56px;font-size:18px;font-weight:400;color:#2a2a2e;letter-spacing:0.400px;transform:scaleX(1.0729);transform-origin:0 0;left:50.80px;">United Kingdom</div><div class="t" style="top:220.56px;font-size:18px;font-weight:400;color:#2a2a2e;letter-spacing:0.400px;transform:scaleX(1.1147);transform-origin:100% 0;right:326.55px;">11,934.60</div><div class="t" style="top:220.56px;font-size:18px;font-weight:400;color:#2a2a2e;letter-spacing:0.400px;transform:scaleX(1.1147);transform-origin:100% 0;right:99.55px;">11,934.60</div><div class="t" style="top:266.56px;font-size:18px;font-weight:400;color:#2a2a2e;letter-spacing:0.400px;transform:scaleX(1.0943);transform-origin:0 0;left:317.00px;">Information Technology</div><div class="t" style="top:266.56px;font-size:18px;font-weight:400;color:#2a2a2e;letter-spacing:0.400px;transform:scaleX(1.1154);transform-origin:100% 0;right:326.55px;">8,081.20</div><div class="t" style="top:266.56px;font-size:18px;font-weight:400;color:#2a2a2e;letter-spacing:0.400px;transform:scaleX(1.1154);transform-origin:100% 0;right:99.55px;">2,707.96</div><div class="t" style="top:312.56px;font-size:18px;font-weight:400;color:#2a2a2e;letter-spacing:0.400px;transform:scaleX(1.0539);transform-origin:0 0;left:317.00px;">Bike</div><div class="t" style="top:312.56px;font-size:18px;font-weight:400;color:#2a2a2e;letter-spacing:0.400px;transform:scaleX(1.1154);transform-origin:100% 0;right:326.55px;">104,890.73</div><div class="t" style="top:312.56px;font-size:18px;font-weight:400;color:#2a2a2e;letter-spacing:0.400px;transform:scaleX(1.1154);transform-origin:100% 0;right:99.55px;">105,190.23</div><div class="t" style="top:358.56px;font-size:18px;font-weight:400;color:#2a2a2e;letter-spacing:0.400px;transform:scaleX(1.0893);transform-origin:0 0;left:317.00px;">Pharmaceutical</div><div class="t" style="top:358.56px;font-size:18px;font-weight:400;color:#2a2a2e;letter-spacing:0.400px;transform:scaleX(1.1154);transform-origin:100% 0;right:326.55px;">325,556.95</div><div class="t" style="top:358.56px;font-size:18px;font-weight:400;color:#2a2a2e;letter-spacing:0.400px;transform:scaleX(1.1154);transform-origin:100% 0;right:99.55px;">108,942.80</div><div class="t" style="top:404.56px;font-size:18px;font-weight:400;color:#2a2a2e;letter-spacing:0.400px;transform:scaleX(1.0597);transform-origin:0 0;left:319.00px;">Toy</div><div class="t" style="top:404.56px;font-size:18px;font-weight:400;color:#2a2a2e;letter-spacing:0.400px;transform:scaleX(1.1134);transform-origin:100% 0;right:326.55px;">1,359,154.80</div><div class="t" style="top:404.56px;font-size:18px;font-weight:400;color:#2a2a2e;letter-spacing:0.400px;transform:scaleX(1.1154);transform-origin:100% 0;right:99.55px;">414,593.50</div><div class="t" style="top:450.56px;font-size:18px;font-weight:400;color:#2a2a2e;letter-spacing:0.400px;transform:scaleX(1.0853);transform-origin:0 0;left:50.80px;">United States of America</div><div class="t" style="top:450.56px;font-size:18px;font-weight:400;color:#2a2a2e;letter-spacing:0.400px;transform:scaleX(1.1154);transform-origin:100% 0;right:325.55px;">40,910.43</div><div class="t" style="top:450.56px;font-size:18px;font-weight:400;color:#2a2a2e;letter-spacing:0.400px;transform:scaleX(1.1154);transform-origin:100% 0;right:98.55px;">40,910.43</div><div class="t" style="top:496.56px;font-size:18px;font-weight:400;color:#2a2a2e;letter-spacing:0.400px;transform:scaleX(1.0943);transform-origin:0 0;left:317.00px;">Information Technology</div><div class="t" style="top:496.56px;font-size:18px;font-weight:400;color:#2a2a2e;letter-spacing:0.400px;transform:scaleX(1.1134);transform-origin:100% 0;right:326.55px;">4,371,867.57</div><div class="t" style="top:496.56px;font-size:18px;font-weight:400;color:#2a2a2e;letter-spacing:0.400px;transform:scaleX(1.1134);transform-origin:100% 0;right:99.55px;">2,171,819.65</div><div class="t" style="top:542.56px;font-size:18px;font-weight:400;color:#2a2a2e;letter-spacing:0.400px;transform:scaleX(1.0539);transform-origin:0 0;left:317.00px;">Bike</div><div class="t" style="top:542.56px;font-size:18px;font-weight:400;color:#2a2a2e;letter-spacing:0.400px;transform:scaleX(1.1154);transform-origin:100% 0;right:325.55px;">99,161.71</div><div class="t" style="top:542.56px;font-size:18px;font-weight:400;color:#2a2a2e;letter-spacing:0.400px;transform:scaleX(1.1154);transform-origin:100% 0;right:98.55px;">97,769.87</div><div class="t" style="top:588.56px;font-size:18px;font-weight:400;color:#2a2a2e;letter-spacing:0.400px;transform:scaleX(1.0590);transform-origin:0 0;left:317.00px;">Food</div><div class="t" style="top:588.56px;font-size:18px;font-weight:400;color:#2a2a2e;letter-spacing:0.400px;transform:scaleX(1.1134);transform-origin:100% 0;right:326.55px;">3,573,328.05</div><div class="t" style="top:588.56px;font-size:18px;font-weight:400;color:#2a2a2e;letter-spacing:0.400px;transform:scaleX(1.1134);transform-origin:100% 0;right:99.55px;">1,028,997.70</div><div class="t" style="top:634.56px;font-size:18px;font-weight:400;color:#2a2a2e;letter-spacing:0.400px;transform:scaleX(1.0893);transform-origin:0 0;left:317.00px;">Pharmaceutical</div><div class="t" style="top:634.56px;font-size:18px;font-weight:400;color:#2a2a2e;letter-spacing:0.400px;transform:scaleX(1.1154);transform-origin:100% 0;right:326.55px;">313,694.00</div><div class="t" style="top:634.56px;font-size:18px;font-weight:400;color:#2a2a2e;letter-spacing:0.400px;transform:scaleX(1.1154);transform-origin:100% 0;right:99.55px;">104,928.00</div><div class="t" style="top:680.56px;font-size:18px;font-weight:400;color:#2a2a2e;letter-spacing:0.400px;transform:scaleX(1.0508);transform-origin:0 0;left:318.00px;">Chemical</div><div class="t" style="top:680.56px;font-size:18px;font-weight:400;color:#2a2a2e;letter-spacing:0.400px;transform:scaleX(1.1154);transform-origin:100% 0;right:326.55px;">686,464.60</div><div class="t" style="top:680.56px;font-size:18px;font-weight:400;color:#2a2a2e;letter-spacing:0.400px;transform:scaleX(1.1154);transform-origin:100% 0;right:99.55px;">234,234.10</div><div class="t" style="top:726.56px;font-size:18px;font-weight:400;color:#2a2a2e;letter-spacing:0.400px;transform:scaleX(1.0597);transform-origin:0 0;left:319.00px;">Toy</div><div class="t" style="top:726.56px;font-size:18px;font-weight:400;color:#2a2a2e;letter-spacing:0.400px;transform:scaleX(1.1134);transform-origin:100% 0;right:326.55px;">1,740,440.60</div><div class="t" style="top:726.56px;font-size:18px;font-weight:400;color:#2a2a2e;letter-spacing:0.400px;transform:scaleX(1.1154);transform-origin:100% 0;right:99.55px;">517,176.20</div><div class="t" style="top:772.56px;font-size:18px;font-weight:400;color:#2a2a2e;letter-spacing:0.400px;transform:scaleX(1.0562);transform-origin:0 0;left:50.80px;">Unknown</div><div class="t" style="top:772.56px;font-size:18px;font-weight:400;color:#2a2a2e;letter-spacing:0.400px;transform:scaleX(1.1216);transform-origin:100% 0;right:326.55px;">0.00</div><div class="t" style="top:772.56px;font-size:18px;font-weight:400;color:#2a2a2e;letter-spacing:0.400px;transform:scaleX(1.1216);transform-origin:100% 0;right:99.55px;">0.00</div><div class="t" style="top:818.56px;font-size:18px;font-weight:400;color:#2a2a2e;letter-spacing:0.400px;transform:scaleX(1.0943);transform-origin:0 0;left:317.00px;">Information Technology</div><div class="t" style="top:818.56px;font-size:18px;font-weight:400;color:#2a2a2e;letter-spacing:0.400px;transform:scaleX(1.1216);transform-origin:100% 0;right:326.55px;">0.00</div><div class="t" style="top:818.56px;font-size:18px;font-weight:400;color:#2a2a2e;letter-spacing:0.400px;transform:scaleX(1.1216);transform-origin:100% 0;right:99.55px;">0.00</div><div class="t" style="top:864.56px;font-size:18px;font-weight:400;color:#2a2a2e;letter-spacing:0.400px;transform:scaleX(1.0539);transform-origin:0 0;left:317.00px;">Bike</div><div class="t" style="top:864.56px;font-size:18px;font-weight:400;color:#2a2a2e;letter-spacing:0.400px;transform:scaleX(1.1216);transform-origin:100% 0;right:326.55px;">0.00</div><div class="t" style="top:864.56px;font-size:18px;font-weight:400;color:#2a2a2e;letter-spacing:0.400px;transform:scaleX(1.1216);transform-origin:100% 0;right:99.55px;">0.00</div><div class="t" style="top:910.56px;font-size:18px;font-weight:400;color:#2a2a2e;letter-spacing:0.400px;transform:scaleX(1.0590);transform-origin:0 0;left:317.00px;">Food</div><div class="t" style="top:910.56px;font-size:18px;font-weight:400;color:#2a2a2e;letter-spacing:0.400px;transform:scaleX(1.1216);transform-origin:100% 0;right:326.55px;">0.00</div><div class="t" style="top:910.56px;font-size:18px;font-weight:400;color:#2a2a2e;letter-spacing:0.400px;transform:scaleX(1.1216);transform-origin:100% 0;right:99.55px;">0.00</div><div class="t" style="top:956.56px;font-size:18px;font-weight:400;color:#2a2a2e;letter-spacing:0.400px;transform:scaleX(1.0893);transform-origin:0 0;left:317.00px;">Pharmaceutical</div><div class="t" style="top:956.56px;font-size:18px;font-weight:400;color:#2a2a2e;letter-spacing:0.400px;transform:scaleX(1.1216);transform-origin:100% 0;right:326.55px;">0.00</div><div class="t" style="top:956.56px;font-size:18px;font-weight:400;color:#2a2a2e;letter-spacing:0.400px;transform:scaleX(1.1216);transform-origin:100% 0;right:99.55px;">0.00</div><div class="t" style="top:1002.56px;font-size:18px;font-weight:400;color:#2a2a2e;letter-spacing:0.400px;transform:scaleX(1.0508);transform-origin:0 0;left:318.00px;">Chemical</div><div class="t" style="top:1002.56px;font-size:18px;font-weight:400;color:#2a2a2e;letter-spacing:0.400px;transform:scaleX(1.1216);transform-origin:100% 0;right:326.55px;">0.00</div><div class="t" style="top:1002.56px;font-size:18px;font-weight:400;color:#2a2a2e;letter-spacing:0.400px;transform:scaleX(1.1216);transform-origin:100% 0;right:99.55px;">0.00</div><div class="t" style="top:1048.56px;font-size:18px;font-weight:400;color:#2a2a2e;letter-spacing:0.400px;transform:scaleX(1.0597);transform-origin:0 0;left:319.00px;">Toy</div><div class="t" style="top:1048.56px;font-size:18px;font-weight:400;color:#2a2a2e;letter-spacing:0.400px;transform:scaleX(1.1216);transform-origin:100% 0;right:326.55px;">0.00</div><div class="t" style="top:1048.56px;font-size:18px;font-weight:400;color:#2a2a2e;letter-spacing:0.400px;transform:scaleX(1.1216);transform-origin:100% 0;right:99.55px;">0.00</div></div>
<div class="t" style="top:21.76px;font-size:18px;font-weight:700;color:#00958f;letter-spacing:-0.162px;left:176.40px;">Basic Analysis</div>
<div class="t" style="top:77.36px;font-size:16px;font-weight:700;color:#858487;letter-spacing:0.150px;transform:scaleX(1.0690);transform-origin:0 0;left:23.80px;">Company</div>
<div class="t" style="top:105.97px;font-size:20px;font-weight:400;color:#2a2a2e;letter-spacing:0.340px;left:27.00px;">All items</div>
<div class="t" style="top:159.56px;font-size:18px;font-weight:700;color:#858487;letter-spacing:0.500px;transform:scaleX(1.0946);transform-origin:0 0;left:99.20px;">Geography</div>
<div class="t" style="top:159.56px;font-size:18px;font-weight:700;color:#858487;letter-spacing:0.500px;transform:scaleX(1.1367);transform-origin:0 0;left:342.60px;">Items.Group 1</div>
<div class="t" style="top:159.56px;font-size:18px;font-weight:700;color:#858487;letter-spacing:0.500px;transform:scaleX(1.1354);transform-origin:0 0;left:576.00px;">Invoice line amount</div>
<div class="t" style="top:159.56px;font-size:18px;font-weight:700;color:#858487;letter-spacing:0.500px;transform:scaleX(1.1070);transform-origin:0 0;left:802.00px;">Gross profit amount</div>
<div style="position:absolute;left:0;top:0;width:1105px;height:300px;overflow:hidden"><div class="t" style="top:159.56px;font-size:18px;font-weight:700;color:#858487;letter-spacing:0.500px;transform:scaleX(1.2071);transform-origin:0 0;left:1028.40px;">Invoice</div></div>
<div class="t" style="top:68.32px;font-size:21px;font-weight:400;color:#4f4f55;letter-spacing:0.828px;left:1170.00px;">Query</div>
<div class="t" style="top:111.66px;font-size:18px;font-weight:400;color:#55555a;letter-spacing:-0.219px;left:1157.20px;">Slicers</div>
<div class="t" style="top:255.76px;font-size:18px;font-weight:400;color:#55555a;letter-spacing:0.100px;left:1157.60px;">Filters</div>
<div class="t" style="top:351.66px;font-size:18px;font-weight:400;color:#55555a;letter-spacing:0.245px;left:1157.60px;">Columns</div>
<div class="t" style="top:573.56px;font-size:18px;font-weight:400;color:#55555a;letter-spacing:-0.605px;left:1157.80px;">Rows</div>
<div class="t" style="top:753.86px;font-size:18px;font-weight:400;color:#55555a;letter-spacing:0.685px;left:1157.40px;">Conditional formatting</div>
<div class="t" style="top:850.36px;font-size:18px;font-weight:400;color:#55555a;letter-spacing:0.177px;left:1157.40px;">Cell calculations</div>
<div class="t" style="top:146.60px;font-size:21.5px;font-weight:400;color:#2e2e33;letter-spacing:0.031px;left:1188.00px;">Company</div>
<div class="t" style="top:386.80px;font-size:21.5px;font-weight:400;color:#2e2e33;letter-spacing:0.319px;left:1187.00px;">Invoice line amount</div>
<div class="t" style="top:428.80px;font-size:21.5px;font-weight:400;color:#2e2e33;letter-spacing:0.511px;left:1188.00px;">Gross profit amount</div>
<div class="t" style="top:470.80px;font-size:21.5px;font-weight:400;color:#2e2e33;letter-spacing:0.369px;left:1187.00px;">Invoice discount amount</div>
<div class="t" style="top:608.80px;font-size:21.5px;font-weight:400;color:#2e2e33;letter-spacing:0.000px;left:1187.60px;">Country</div>
<div class="t" style="top:650.80px;font-size:21.5px;font-weight:400;color:#2e2e33;letter-spacing:0.000px;left:1187.60px;">Group 1</div>
<div class="t" style="top:68.55px;font-size:20.5px;font-weight:400;color:#4f4f55;letter-spacing:1.131px;left:1685.40px;-webkit-text-stroke:0.55px #4f4f55;">Connection</div>
<div class="t" style="top:105.35px;font-size:20.5px;font-weight:400;color:#4f4f55;letter-spacing:1.080px;left:1685.20px;-webkit-text-stroke:0.55px #4f4f55;">Dimension Tree</div>
<div class="t" style="top:160.40px;font-size:21.5px;font-weight:400;color:#1f1f22;letter-spacing:0.301px;left:1674.00px;">Training</div>
<div class="t" style="top:231.30px;font-size:21.5px;font-weight:400;color:#7a797e;letter-spacing:-0.481px;left:1673.40px;">Search...</div>
<div class="t" style="top:284.60px;font-size:21.5px;font-weight:400;color:#3c3c41;letter-spacing:0.316px;left:1722.00px;">Training</div>
<div class="t" style="top:320.60px;font-size:21.5px;font-weight:400;color:#3c3c41;letter-spacing:0.000px;left:1745.00px;">Measures</div>
<div class="t" style="top:356.60px;font-size:21.5px;font-weight:400;color:#3c3c41;letter-spacing:0.000px;left:1746.00px;">Company</div>
<div class="t" style="top:392.60px;font-size:21.5px;font-weight:400;color:#3c3c41;letter-spacing:0.000px;left:1746.00px;">Countries</div>
<div class="t" style="top:428.60px;font-size:21.5px;font-weight:400;color:#3c3c41;letter-spacing:0.000px;left:1746.00px;">Currency</div>
<div class="t" style="top:464.60px;font-size:21.5px;font-weight:400;color:#3c3c41;letter-spacing:0.000px;left:1746.00px;">Customer groups</div>
<div class="t" style="top:500.60px;font-size:21.5px;font-weight:400;color:#3c3c41;letter-spacing:0.000px;left:1746.00px;">Customers</div>
<div class="t" style="top:536.60px;font-size:21.5px;font-weight:400;color:#3c3c41;letter-spacing:0.000px;left:1745.00px;">Date</div>
<div class="t" style="top:572.60px;font-size:21.5px;font-weight:400;color:#3c3c41;letter-spacing:0.000px;left:1745.00px;">Direction</div>
<div class="t" style="top:608.60px;font-size:21.5px;font-weight:400;color:#3c3c41;letter-spacing:0.000px;left:1745.00px;">Employee</div>
<div class="t" style="top:644.60px;font-size:21.5px;font-weight:400;color:#3c3c41;letter-spacing:0.000px;left:1746.00px;">Geography</div>
<div class="t" style="top:680.60px;font-size:21.5px;font-weight:400;color:#3c3c41;letter-spacing:0.000px;left:1745.00px;">Item groups</div>
<div class="t" style="top:716.60px;font-size:21.5px;font-weight:400;color:#3c3c41;letter-spacing:0.000px;left:1745.00px;">Items</div>
<div class="t" style="top:752.60px;font-size:21.5px;font-weight:400;color:#3c3c41;letter-spacing:0.000px;left:1745.00px;">Locations</div>
<div class="t" style="top:788.60px;font-size:21.5px;font-weight:400;color:#3c3c41;letter-spacing:0.000px;left:1746.00px;">Sales status</div>
<div class="t" style="top:824.60px;font-size:21.5px;font-weight:400;color:#3c3c41;letter-spacing:0.000px;left:1746.00px;">Sites - Shipment site</div>
<div class="t" style="top:860.60px;font-size:21.5px;font-weight:400;color:#3c3c41;letter-spacing:0.000px;left:1746.00px;">Storage Locations</div>
<div class="t" style="top:896.60px;font-size:21.5px;font-weight:400;color:#3c3c41;letter-spacing:0.000px;left:1745.00px;">Units</div>
<div class="t" style="top:932.60px;font-size:21.5px;font-weight:400;color:#3c3c41;letter-spacing:0.000px;left:1745.00px;">Units of measure - Sales</div>
</body></html>
